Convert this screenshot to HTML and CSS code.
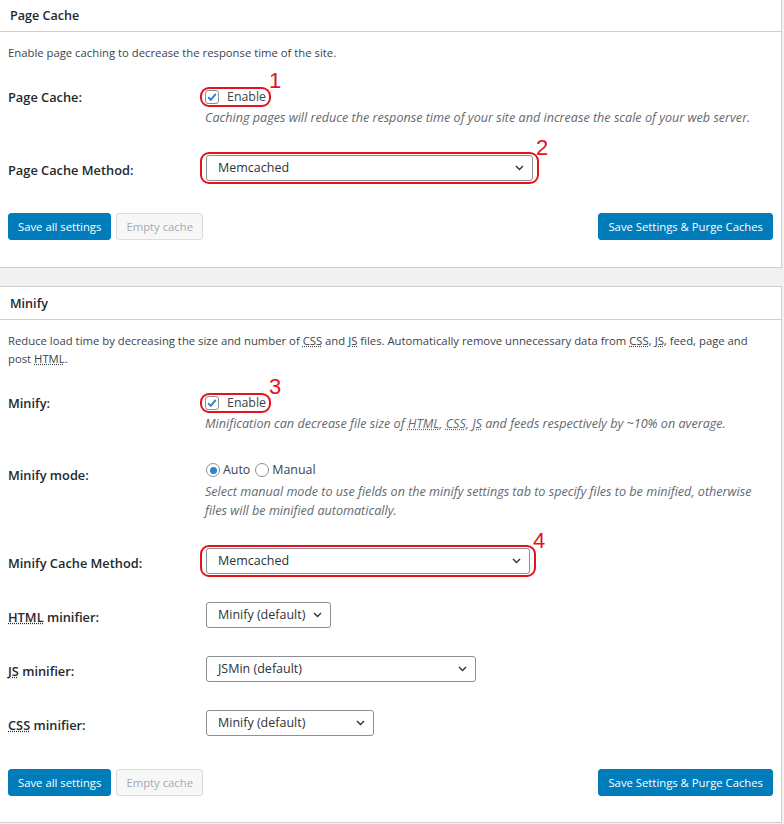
FILE: index.html
```html
<!DOCTYPE html>
<html>
<head lang="en">
    <meta charset="UTF-8">
    <title>General Settings</title>
    <link rel="stylesheet" href="styles.css">
</head>
<body>
<div class="wrap">
    <div class="postbox">
        <h2 class="hndle">Page Cache</h2>
        <div class="inside inside-first">
            <p class="intro">Enable page caching to decrease the response time of the site.</p>
            <div class="row">
                <div class="th">Page Cache:</div>
                <div class="td">
                    <label class="check mark mark-check">
                        <span class="cb"><svg width="12" height="12" viewBox="0 0 12 12"><path d="M2.2 6.2 L4.8 8.8 L9.8 2.8" fill="none" stroke="#3582c4" stroke-width="2"/></svg></span>Enable<span class="num">1</span>
                    </label>
                    <p class="description">Caching pages will reduce the response time of your site and increase the scale of your web server.</p>
                </div>
            </div>
            <div class="row">
                <div class="th th-select">Page Cache Method:</div>
                <div class="td">
                    <div class="select sel-pgcache mark mark-select">
                        <span>Memcached</span>
                        <svg width="9" height="6" viewBox="0 0 9 6"><path d="M1 1 L4.5 4.5 L8 1" fill="none" stroke="#2c3338" stroke-width="1.4"/></svg>
                        <span class="num num-select">2</span>
                    </div>
                </div>
            </div>
            <div class="submit submit-first">
                <div class="btns">
                    <span class="button button-primary">Save all settings</span>
                    <span class="button button-disabled">Empty cache</span>
                </div>
                <span class="button button-primary">Save Settings &amp; Purge Caches</span>
            </div>
        </div>
    </div>

    <div class="postbox">
        <h2 class="hndle">Minify</h2>
        <div class="inside">
            <p class="intro">Reduce load time by decreasing the size and number of <abbr title="Cascading Style Sheets">CSS</abbr> and <abbr title="JavaScript">JS</abbr> files. Automatically remove unnecessary data from <abbr title="Cascading Style Sheets">CSS</abbr>, <abbr title="JavaScript">JS</abbr>, feed, page and<br>post <abbr title="Hypertext Markup Language">HTML</abbr>.</p>
            <div class="row">
                <div class="th">Minify:</div>
                <div class="td">
                    <label class="check mark mark-check">
                        <span class="cb"><svg width="12" height="12" viewBox="0 0 12 12"><path d="M2.2 6.2 L4.8 8.8 L9.8 2.8" fill="none" stroke="#3582c4" stroke-width="2"/></svg></span>Enable<span class="num">3</span>
                    </label>
                    <p class="description">Minification can decrease file size of <abbr title="Hypertext Markup Language">HTML</abbr>, <abbr title="Cascading Style Sheets">CSS</abbr>, <abbr title="JavaScript">JS</abbr> and feeds respectively by ~10% on average.</p>
                </div>
            </div>
            <div class="row">
                <div class="th th-radio">Minify mode:</div>
                <div class="td">
                    <div class="radios">
                        <label class="radio"><span class="rd on"></span>Auto</label>
                        <label class="radio"><span class="rd"></span>Manual</label>
                    </div>
                    <p class="description">Select manual mode to use fields on the minify settings tab to specify files to be minified, otherwise files will be minified automatically.</p>
                </div>
            </div>
            <div class="row">
                <div class="th th-select">Minify Cache Method:</div>
                <div class="td">
                    <div class="select sel-mincache mark mark-select">
                        <span>Memcached</span>
                        <svg width="9" height="6" viewBox="0 0 9 6"><path d="M1 1 L4.5 4.5 L8 1" fill="none" stroke="#2c3338" stroke-width="1.4"/></svg>
                        <span class="num num-select">4</span>
                    </div>
                </div>
            </div>
            <div class="row">
                <div class="th th-select"><abbr title="Hypertext Markup Language">HTML</abbr> minifier:</div>
                <div class="td">
                    <div class="select sel-html">
                        <span>Minify (default)</span>
                        <svg width="9" height="6" viewBox="0 0 9 6"><path d="M1 1 L4.5 4.5 L8 1" fill="none" stroke="#2c3338" stroke-width="1.4"/></svg>
                    </div>
                </div>
            </div>
            <div class="row">
                <div class="th th-select"><abbr title="JavaScript">JS</abbr> minifier:</div>
                <div class="td">
                    <div class="select sel-js">
                        <span>JSMin (default)</span>
                        <svg width="9" height="6" viewBox="0 0 9 6"><path d="M1 1 L4.5 4.5 L8 1" fill="none" stroke="#2c3338" stroke-width="1.4"/></svg>
                    </div>
                </div>
            </div>
            <div class="row">
                <div class="th th-select"><abbr title="Cascading Style Sheets">CSS</abbr> minifier:</div>
                <div class="td">
                    <div class="select sel-css">
                        <span>Minify (default)</span>
                        <svg width="9" height="6" viewBox="0 0 9 6"><path d="M1 1 L4.5 4.5 L8 1" fill="none" stroke="#2c3338" stroke-width="1.4"/></svg>
                    </div>
                </div>
            </div>
            <div class="submit">
                <div class="btns">
                    <span class="button button-primary">Save all settings</span>
                    <span class="button button-disabled">Empty cache</span>
                </div>
                <span class="button button-primary">Save Settings &amp; Purge Caches</span>
            </div>
        </div>
    </div>
</div>
</body>
</html>
```

FILE: styles.css
```css
*{margin: 0; padding: 0; box-sizing: border-box;}
body {
    background-color: #f1f1f1;
    font-family: "Open Sans", "Noto Sans", sans-serif;
    font-size: 11.3px;
    line-height: 18px;
    color: #3c434a;
}
abbr {
    text-decoration: underline dotted;
}
.wrap {
    margin: -2px 2px 0 0;
}
.postbox {
    background-color: #fff;
    border: 1px solid #ccd0d4;
    border-left: 0;
    margin-bottom: 18px;
}
.hndle {
    padding: 2px 10px 0;
    line-height: 30px;
    font-size: 12.6px;
    font-weight: 600;
    color: #23282d;
    border-bottom: 1px solid #ccd0d4;
}
.inside {
    padding: 0 8px 26px;
}
.inside-first {
    padding-bottom: 27px;
}
.intro {
    margin: 11.5px 0 12px;
}
.row {
    display: grid;
    grid-template-columns: 197px 1fr;
    padding: 14px 0;
}
.th {
    font-size: 12.8px;
    font-weight: 600;
    color: #23282d;
    line-height: 18px;
}
.th-radio {
    padding-top: 5px;
}
.th-select {
    padding-top: 6px;
}
.description {
    margin-top: 2.5px;
    font-size: 12.6px;
    font-style: italic;
    color: #646970;
    line-height: 19px;
}

/* checkbox + radio */
.check {
    display: flex;
    align-items: center;
    width: max-content;
    height: 18px;
    font-size: 12.4px;
}
.cb {
    width: 14px;
    height: 14px;
    border: 1px solid #8c8f94;
    border-radius: 3px;
    margin-right: 8px;
    display: flex;
    align-items: center;
    justify-content: center;
}
.radios {
    display: flex;
    align-items: center;
    height: 18px;
    font-size: 12.4px;
}
.radio {
    display: flex;
    align-items: center;
    margin-right: 4px;
}
.rd {
    width: 14px;
    height: 14px;
    border: 1px solid #8c8f94;
    border-radius: 50%;
    margin: 0 3px 0 1px;
    display: flex;
    align-items: center;
    justify-content: center;
}
.rd.on::after {
    content: "";
    width: 7px;
    height: 7px;
    border-radius: 50%;
    background-color: #3582c4;
}

/* select */
.select {
    display: flex;
    align-items: center;
    justify-content: space-between;
    height: 26px;
    margin-left: 1px;
    padding: 0 8px 0 11px;
    border: 1px solid #8c8f94;
    border-radius: 3px;
    font-size: 12.5px;
    color: #2c3338;
    background-color: #fff;
}
.sel-pgcache { width: 327px; }
.sel-mincache { width: 324px; }
.sel-html { width: 125px; }
.sel-js { width: 270px; }
.sel-css { width: 168px; }

/* buttons */
.submit {
    display: flex;
    justify-content: space-between;
    margin-top: 19px;
}
.submit-first {
    margin-top: 18px;
}
.btns {
    display: flex;
    gap: 5px;
}
.button {
    display: inline-block;
    height: 27px;
    padding: 0 9px;
    line-height: 25px;
    border: 1px solid;
    border-radius: 3px;
    font-size: 11.3px;
}
.button-primary {
    background-color: #007cba;
    border-color: #007cba;
    color: #fff;
}
.button-disabled {
    background-color: #f6f7f7;
    border-color: #dcdcde;
    color: #a7aaad;
}

/* red annotations */
.mark {
    position: relative;
}
.mark::before {
    content: "";
    position: absolute;
    border: 2px solid #e3121b;
    border-radius: 9px;
}
.mark-check::before {
    top: -1px;
    bottom: -1px;
    left: -5px;
    right: -5px;
}
.mark-select::before {
    top: -4px;
    bottom: -4px;
    left: -7px;
    right: -7px;
}
.num {
    position: absolute;
    left: calc(100% + 3px);
    top: -18px;
    font-family: "Liberation Sans", Arial, sans-serif;
    font-size: 22px;
    line-height: 22px;
    color: #e3121b;
}
.num-select {
    left: calc(100% + 4px);
    top: -19px;
}
```
